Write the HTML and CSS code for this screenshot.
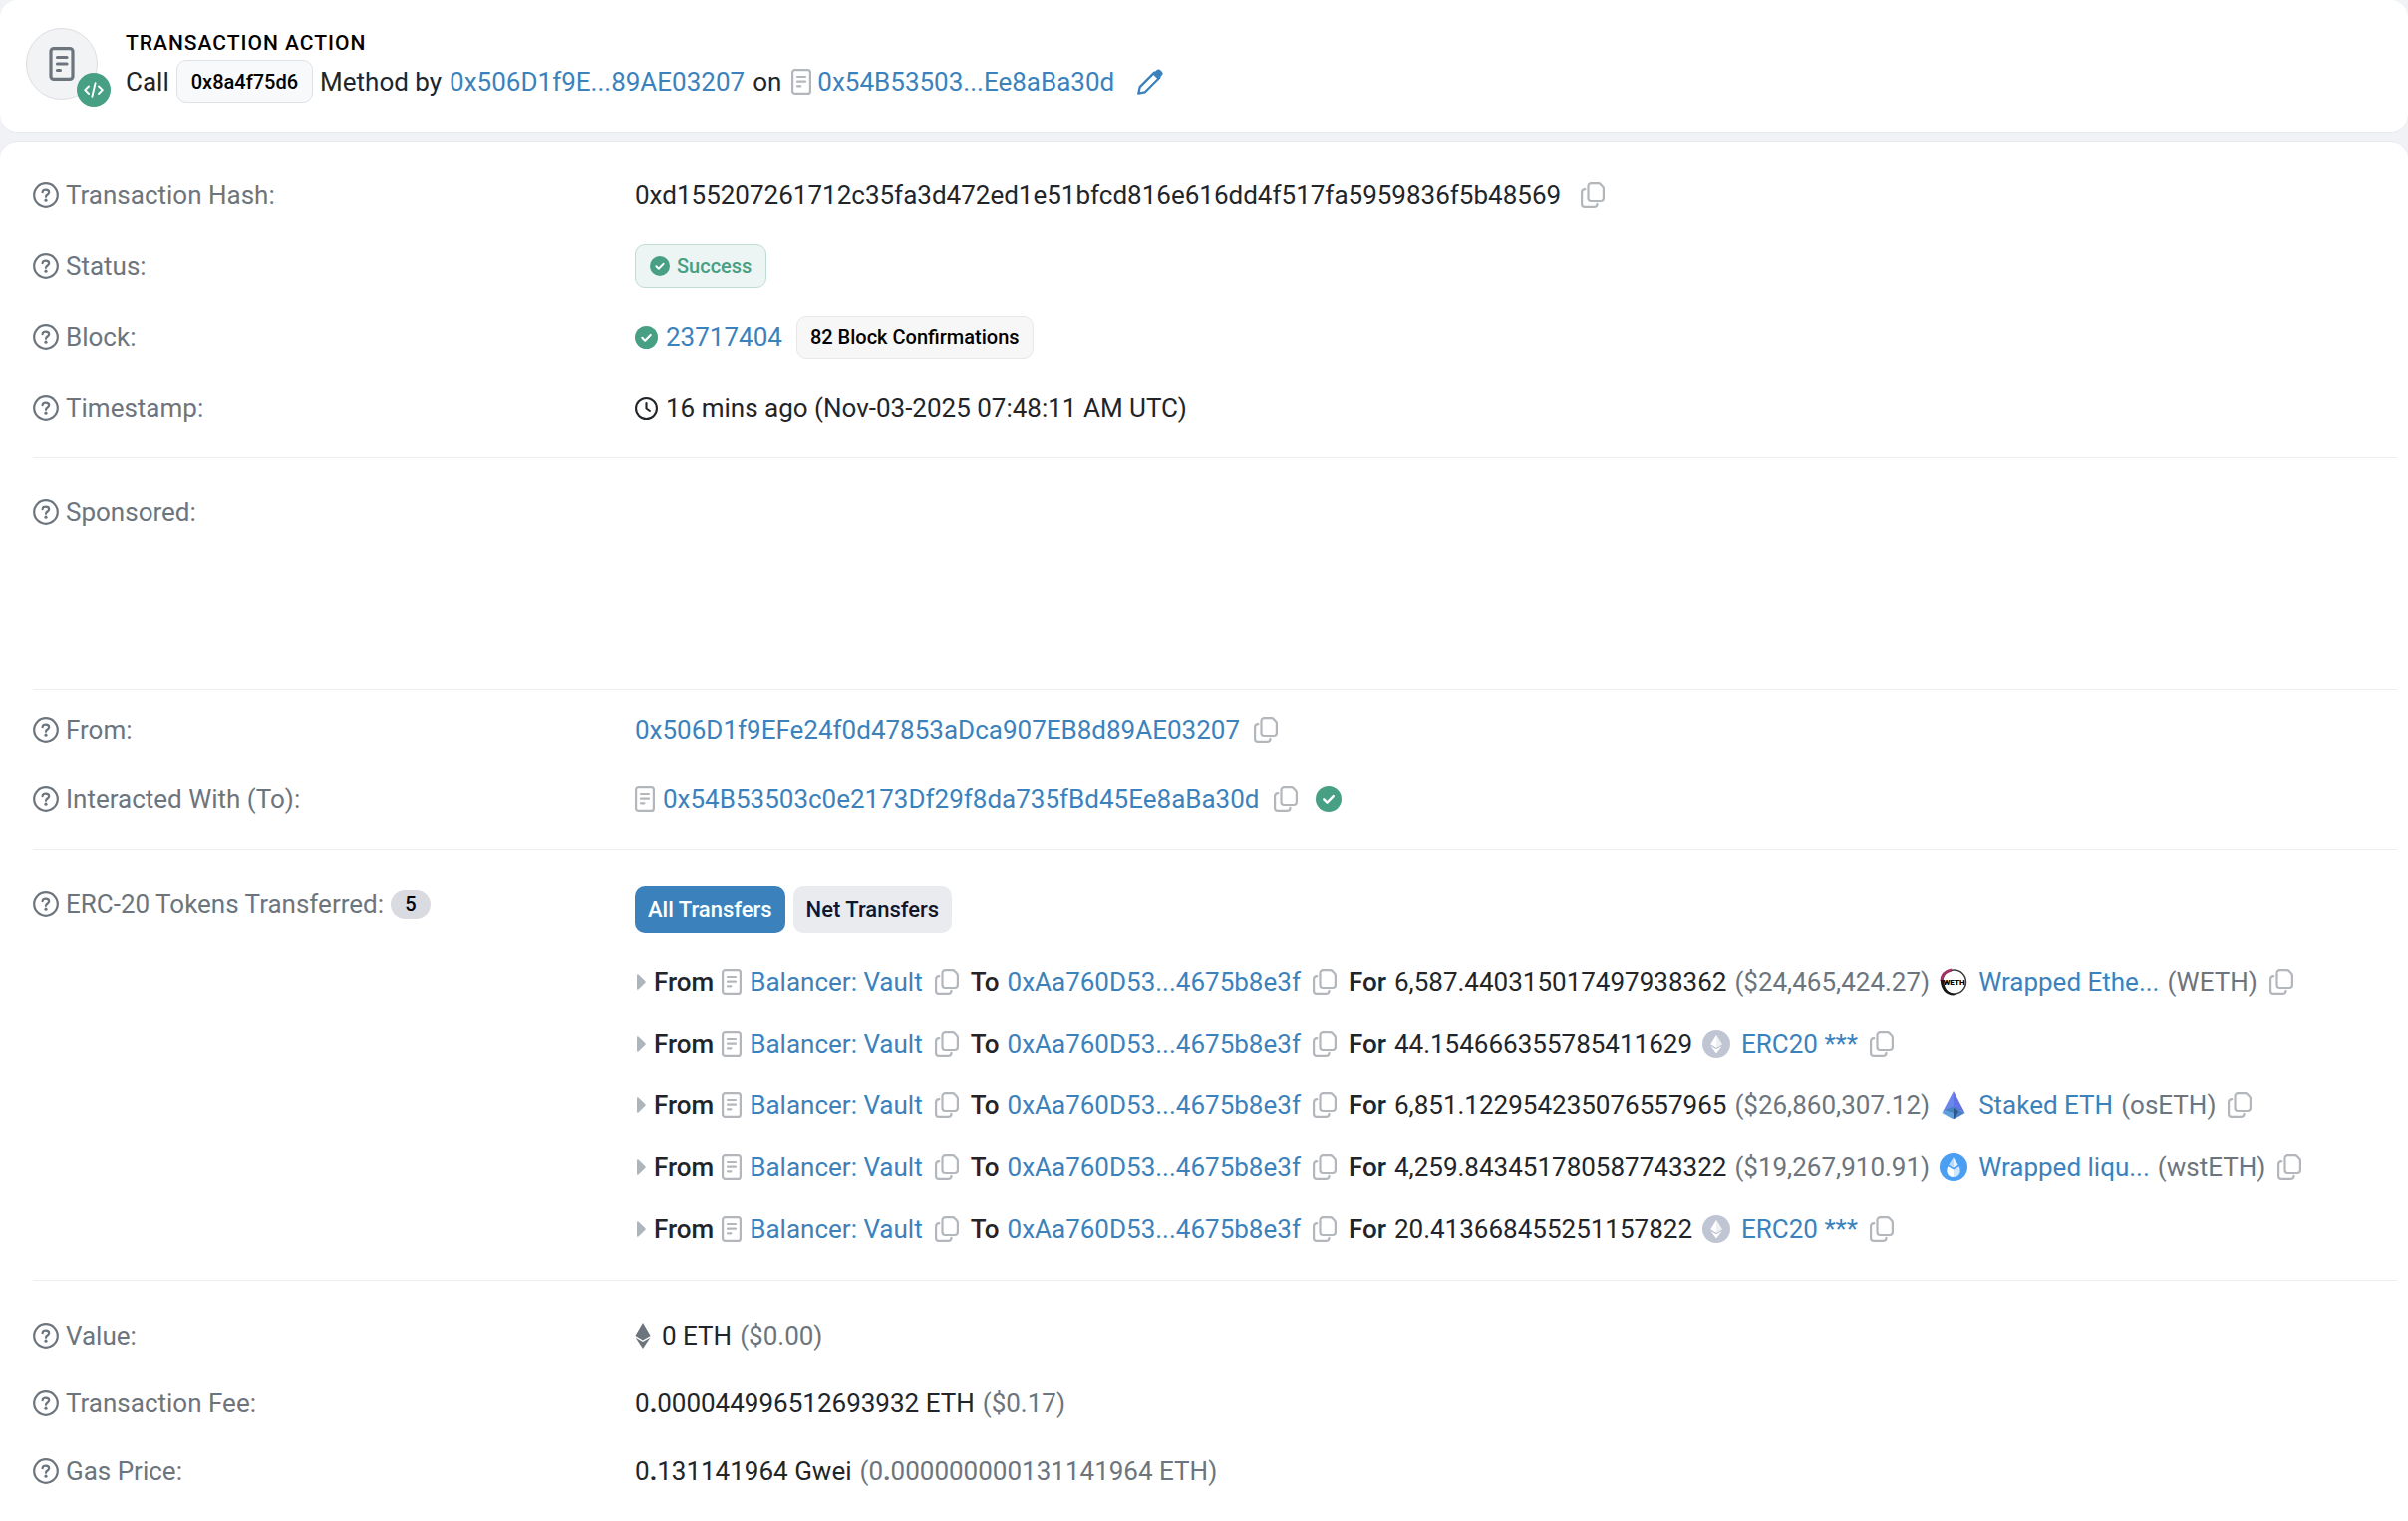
FILE: index.html
```html
<!DOCTYPE html>
<html lang="en">
<head>
<meta charset="utf-8">
<title>Transaction Details</title>
<link rel="stylesheet" href="styles.css">
</head>
<body>
<svg class="sprite" aria-hidden="true">
  <symbol id="help" viewBox="0 0 26 26"><g fill="none" stroke="currentColor" stroke-width="2.2"><circle cx="13" cy="13" r="11.8"/><path d="M9.6 10.2C9.7 8.4 11 7.7 12.9 7.7c2 0 3.3 1 3.3 2.6 0 2.1-3.2 2.3-3.2 4.5" stroke-linecap="round"/></g><circle cx="13" cy="18.2" r="1.6" fill="currentColor"/></symbol>
  <symbol id="doc" viewBox="0 0 20 26"><g fill="none" stroke="currentColor" stroke-width="2.2" stroke-linecap="round"><rect x="1.100" y="1.100" width="17.800" height="23.800" rx="2.500"/><path d="M6 8h8M6 12.700h8M6 17.300h3.400"/></g></symbol>
  <symbol id="doc-bold" viewBox="0 0 26 34"><g fill="none" stroke="currentColor" stroke-width="3.200" stroke-linecap="round"><rect x="2" y="1.600" width="22" height="30.800" rx="3"/><path d="M8.500 10.500h9.500M8.500 17h9.500M8.500 23.500h3"/></g></symbol>
  <symbol id="copy" viewBox="0 0 24 26"><g fill="none" stroke="currentColor" stroke-width="2.2" stroke-linecap="round" stroke-linejoin="round"><path d="M10.500 1.100h7.300c.7 0 1.300.3 1.800.8l2.500 2.700c.5.5.8 1.100.8 1.800v9.600c0 1.700-1.300 3-3 3h-9.400c-1.700 0-3-1.300-3-3V4.100c0-1.700 1.300-3 3-3z"/><path d="M4.300 7.200C2.300 7.300 1.100 8.500 1.100 10.300V21.900c0 1.700 1.300 3 3 3h8.900c2.100 0 3.500-1.300 3.500-3"/></g></symbol>
  <symbol id="check" viewBox="0 0 24 24"><circle cx="12" cy="12" r="12" fill="currentColor"/><path d="M7.600 12.300l3 3 5.800-6" fill="none" stroke="#fff" stroke-width="2.200" stroke-linecap="round" stroke-linejoin="round"/></symbol>
  <symbol id="clock" viewBox="0 0 24 24"><g fill="none" stroke="currentColor" stroke-width="2.200" stroke-linecap="round" stroke-linejoin="round"><circle cx="12" cy="12" r="10.900"/><path d="M12 6.200V12l3.600 2.600"/></g></symbol>
  <symbol id="code" viewBox="0 0 20 16"><path d="M5 4.500L1.200 8.200 5 12M15 4.500l3.800 3.700L15 12M11.600 1.200L8.400 14.800" fill="none" stroke="currentColor" stroke-width="1.900" stroke-linecap="round" stroke-linejoin="round"/></symbol>
  <symbol id="pencil" viewBox="0 0 26 26"><path d="M1.300 24.700l1.400-6.600L17.200 3.600l5.200 5.200L7.900 23.300z" fill="none" stroke="currentColor" stroke-width="2.300" stroke-linejoin="round"/><path d="M15.500 5.200l3.900-3.900c1.200-1.200 2.700-1.200 3.900 0l1.400 1.400c1.200 1.200 1.200 2.700 0 3.900l-3.900 3.900z" fill="currentColor"/></symbol>
  <symbol id="caret" viewBox="0 0 9 16"><path d="M0 1.200C0 .3.800 0 1.500.6l6.700 6.300c.7.700.7 1.500 0 2.200L1.500 15.400C.8 16 0 15.700 0 14.800z" fill="currentColor"/></symbol>
  <symbol id="eth" viewBox="0 0 16 26"><path d="M8 0l7.600 13L8 17.500.4 13zM8 19l7.400-4.300L8 26 .6 14.700z" fill="currentColor"/></symbol>
  <symbol id="erc20" viewBox="0 0 28 28"><circle cx="14" cy="14" r="14" fill="#bfc5d3"/><path d="M14 5l5.800 9.300L14 17.700l-5.800-3.400zM14 19.200l5.600-3.300L14 23.500l-5.600-7.600z" fill="#fff"/><path d="M14 5l5.800 9.300L14 17.700z" fill="#eef0f4"/></symbol>
  <symbol id="oseth" viewBox="0 0 28 28"><path d="M14 0L2.500 22 14 16z" fill="#6b86ee"/><path d="M14 0l11.500 22L14 16z" fill="#6273ea"/><path d="M2.500 22L14 15.500V28.500z" fill="#5c9fdc"/><path d="M25.500 22L14 15.500V28.500z" fill="#4a80c8"/><path d="M5 19l9-3.500 7 3.500-7 3z" fill="#4682bd"/><path d="M14 17l5 3.500-5 8z" fill="#2c5589"/></symbol>
  <symbol id="wsteth" viewBox="0 0 28 28"><circle cx="14" cy="14" r="14" fill="#4b9ff2"/><path d="M14 4.500l4.600 7.300L14 14.500l-4.600-2.700z" fill="#e6f2ff"/><path d="M14 4.500v10l-4.600-2.700z" fill="#b9dafb"/><path d="M8.500 13.300L14 16.500V24c-6.300 0-8.200-6-5.500-10.700z" fill="#fff"/><path d="M19.500 13.300L14 16.500V24c6.300 0 8.200-6 5.500-10.700z" fill="#cfe6fd"/></symbol>
</svg>

<header class="card action">
  <div class="avatar">
    <svg class="avatar-doc"><use href="#doc-bold"/></svg>
    <span class="avatar-badge"><svg class="code-icon"><use href="#code"/></svg></span>
  </div>
  <div class="action-text">
    <h1 class="action-title">TRANSACTION ACTION</h1>
    <div class="line">
      <span>Call</span>
      <span class="chip method">0x8a4f75d6</span>
      <span>Method by</span>
      <a href="#from">0x506D1f9E...89AE03207</a>
      <span>on</span>
      <span class="with-doc"><svg class="doc"><use href="#doc"/></svg><a href="#to">0x54B53503...Ee8aBa30d</a></span>
      <button class="icon-btn edit" aria-label="Edit note"><svg class="pencil"><use href="#pencil"/></svg></button>
    </div>
  </div>
</header>

<main class="card details">
  <section class="group">
    <div class="row">
      <div class="label"><svg class="help"><use href="#help"/></svg>Transaction Hash:</div>
      <div class="line"><span>0xd155207261712c35fa3d472ed1e51bfcd816e616dd4f517fa5959836f5b48569</span><button class="icon-btn wide" aria-label="Copy hash"><svg class="copy"><use href="#copy"/></svg></button></div>
    </div>
    <div class="row">
      <div class="label"><svg class="help"><use href="#help"/></svg>Status:</div>
      <div class="line"><span class="chip success"><svg class="check-sm"><use href="#check"/></svg>Success</span></div>
    </div>
    <div class="row">
      <div class="label"><svg class="help"><use href="#help"/></svg>Block:</div>
      <div class="line"><svg class="check-md"><use href="#check"/></svg><a href="#block">23717404</a><span class="chip confirmations">82 Block Confirmations</span></div>
    </div>
    <div class="row">
      <div class="label"><svg class="help"><use href="#help"/></svg>Timestamp:</div>
      <div class="line"><svg class="clock"><use href="#clock"/></svg><span>16 mins ago (Nov-03-2025 07:48:11 AM UTC)</span></div>
    </div>
  </section>

  <section class="group sponsored">
    <div class="row">
      <div class="label"><svg class="help"><use href="#help"/></svg>Sponsored:</div>
    </div>
  </section>

  <section class="group parties">
    <div class="row" id="from">
      <div class="label"><svg class="help"><use href="#help"/></svg>From:</div>
      <div class="line"><a href="#from">0x506D1f9EFe24f0d47853aDca907EB8d89AE03207</a><button class="icon-btn party" aria-label="Copy address"><svg class="copy"><use href="#copy"/></svg></button></div>
    </div>
    <div class="row" id="to">
      <div class="label"><svg class="help"><use href="#help"/></svg>Interacted With (To):</div>
      <div class="line"><svg class="doc"><use href="#doc"/></svg><a href="#to">0x54B53503c0e2173Df29f8da735fBd45Ee8aBa30d</a><button class="icon-btn party" aria-label="Copy address"><svg class="copy"><use href="#copy"/></svg></button><svg class="check-lg"><use href="#check"/></svg></div>
    </div>
  </section>

  <section class="group">
    <div class="row tokens">
      <div class="label"><svg class="help"><use href="#help"/></svg>ERC-20 Tokens Transferred:<span class="count">5</span></div>
      <div>
        <div class="tabs"><button class="tab active">All Transfers</button><button class="tab">Net Transfers</button></div>
        <ul class="transfers">
          <li class="line"><svg class="caret"><use href="#caret"/></svg><b>From</b><svg class="doc"><use href="#doc"/></svg><a href="#vault">Balancer: Vault</a><button class="icon-btn" aria-label="Copy sender"><svg class="copy"><use href="#copy"/></svg></button><b>To</b><a href="#receiver">0xAa760D53...4675b8e3f</a><button class="icon-btn" aria-label="Copy receiver"><svg class="copy"><use href="#copy"/></svg></button><b>For</b><span>6,587.440315017497938362</span><span class="muted">($24,465,424.27)</span><svg class="token" viewBox="0 0 28 28"><circle cx="14.500" cy="14" r="12" fill="#fff" stroke="#3a3a3a" stroke-width="1.500"/><path d="M12 2C6 3 2 7 2 13" fill="none" stroke="#a63062" stroke-width="3"/><path d="M.8 12C1 21 6 27.500 14 27.500l3-1C9 26 4.500 21 4 12z" fill="#181818"/><text x="14.500" y="17" text-anchor="middle" class="weth-text">WETH</text></svg><a href="#weth-token">Wrapped Ethe...</a><span class="muted">(WETH)</span><button class="icon-btn" aria-label="Copy token"><svg class="copy"><use href="#copy"/></svg></button></li>
          <li class="line"><svg class="caret"><use href="#caret"/></svg><b>From</b><svg class="doc"><use href="#doc"/></svg><a href="#vault">Balancer: Vault</a><button class="icon-btn" aria-label="Copy sender"><svg class="copy"><use href="#copy"/></svg></button><b>To</b><a href="#receiver">0xAa760D53...4675b8e3f</a><button class="icon-btn" aria-label="Copy receiver"><svg class="copy"><use href="#copy"/></svg></button><b>For</b><span>44.154666355785411629</span><svg class="token"><use href="#erc20"/></svg><a href="#token">ERC20 ***</a><button class="icon-btn" aria-label="Copy token"><svg class="copy"><use href="#copy"/></svg></button></li>
          <li class="line"><svg class="caret"><use href="#caret"/></svg><b>From</b><svg class="doc"><use href="#doc"/></svg><a href="#vault">Balancer: Vault</a><button class="icon-btn" aria-label="Copy sender"><svg class="copy"><use href="#copy"/></svg></button><b>To</b><a href="#receiver">0xAa760D53...4675b8e3f</a><button class="icon-btn" aria-label="Copy receiver"><svg class="copy"><use href="#copy"/></svg></button><b>For</b><span>6,851.122954235076557965</span><span class="muted">($26,860,307.12)</span><svg class="token"><use href="#oseth"/></svg><a href="#oseth-token">Staked ETH</a><span class="muted">(osETH)</span><button class="icon-btn" aria-label="Copy token"><svg class="copy"><use href="#copy"/></svg></button></li>
          <li class="line"><svg class="caret"><use href="#caret"/></svg><b>From</b><svg class="doc"><use href="#doc"/></svg><a href="#vault">Balancer: Vault</a><button class="icon-btn" aria-label="Copy sender"><svg class="copy"><use href="#copy"/></svg></button><b>To</b><a href="#receiver">0xAa760D53...4675b8e3f</a><button class="icon-btn" aria-label="Copy receiver"><svg class="copy"><use href="#copy"/></svg></button><b>For</b><span>4,259.843451780587743322</span><span class="muted">($19,267,910.91)</span><svg class="token"><use href="#wsteth"/></svg><a href="#wsteth-token">Wrapped liqu...</a><span class="muted">(wstETH)</span><button class="icon-btn" aria-label="Copy token"><svg class="copy"><use href="#copy"/></svg></button></li>
          <li class="line"><svg class="caret"><use href="#caret"/></svg><b>From</b><svg class="doc"><use href="#doc"/></svg><a href="#vault">Balancer: Vault</a><button class="icon-btn" aria-label="Copy sender"><svg class="copy"><use href="#copy"/></svg></button><b>To</b><a href="#receiver">0xAa760D53...4675b8e3f</a><button class="icon-btn" aria-label="Copy receiver"><svg class="copy"><use href="#copy"/></svg></button><b>For</b><span>20.413668455251157822</span><svg class="token"><use href="#erc20"/></svg><a href="#token">ERC20 ***</a><button class="icon-btn" aria-label="Copy token"><svg class="copy"><use href="#copy"/></svg></button></li>
        </ul>
      </div>
    </div>
  </section>

  <section class="group costs">
    <div class="row">
      <div class="label"><svg class="help"><use href="#help"/></svg>Value:</div>
      <div class="line"><svg class="eth"><use href="#eth"/></svg><span>0 ETH</span><span class="muted">($0.00)</span></div>
    </div>
    <div class="row">
      <div class="label"><svg class="help"><use href="#help"/></svg>Transaction Fee:</div>
      <div class="line"><span>0<b class="dot">.</b>000044996512693932 ETH</span><span class="muted">($0.17)</span></div>
    </div>
    <div class="row">
      <div class="label"><svg class="help"><use href="#help"/></svg>Gas Price:</div>
      <div class="line"><span>0<b class="dot">.</b>131141964 Gwei</span><span class="muted">(0<b class="dot">.</b>000000000131141964 ETH)</span></div>
    </div>
  </section>
</main>
</body>
</html>
```
FILE: styles.css
```css
* {
  box-sizing: border-box;
}

body {
  margin: 0;
  background: #f0f2f6;
  color: #212529;
  font: 26px/32px Roboto, "Liberation Sans", sans-serif;
}

svg {
  display: block;
  flex: none;
}

.sprite {
  position: absolute;
  width: 0;
  height: 0;
}

a {
  color: #3b82bd;
  text-decoration: none;
}

b {
  font-weight: 500;
}

.dot {
  font-weight: 700;
}

.muted {
  color: #6c757d;
}

.card {
  background: #fff;
  border: 1px solid #e6e8ec;
  border-width: 1px 0;
  border-radius: 18px;
}

/* Header card */
.action {
  display: flex;
  gap: 28px;
  border-top: 0;
  padding: 28px 26px 29px;
}

.avatar {
  position: relative;
  display: flex;
  align-items: center;
  justify-content: center;
  width: 72px;
  height: 72px;
  border: 1px solid #dcdee1;
  border-radius: 50%;
  background: #f2f3f5;
  color: #6c757d;
}

.avatar-doc {
  width: 26px;
  height: 34px;
}

.avatar-badge {
  position: absolute;
  right: -14px;
  bottom: -8px;
  display: flex;
  align-items: center;
  justify-content: center;
  width: 34px;
  height: 34px;
  border-radius: 50%;
  background: #479f84;
  color: #fff;
}

.code-icon {
  width: 20px;
  height: 16px;
}

.action-title {
  margin: 3px 0 5px;
  color: #000;
  font-size: 21px;
  font-weight: 500;
  line-height: 24px;
  letter-spacing: 1px;
}

.line {
  display: flex;
  align-items: center;
  gap: 8px;
  white-space: nowrap;
}

.with-doc {
  display: flex;
  align-items: center;
  gap: 6px;
  margin-left: 2px;
}

.chip {
  display: flex;
  align-items: center;
  gap: 7px;
  height: 43px;
  padding: 0 14px;
  border: 1px solid #dee2e6;
  border-radius: 10px;
  background: #f8f9fb;
  color: #000;
  font-size: 20px;
  font-weight: 500;
}

.chip.method {
  margin: 0 -1px;
}

.chip.success {
  height: 44px;
  border-color: #bfdcd3;
  background: #ecf5f3;
  color: #479f84;
}

.chip.confirmations {
  margin-left: 6px;
  padding: 0 13px;
  border-color: #e6e7e9;
  background: #f7f7f8;
}

.icon-btn {
  margin: 0 4px;
  padding: 0;
  border: 0;
  background: none;
  color: #b3b7bc;
}

.icon-btn.wide {
  margin: 0 12px;
}

.icon-btn.party {
  margin: 0 6px;
}

.icon-btn.edit {
  margin: 0 15px;
  color: #3b82bd;
}

.help,
.pencil,
.check-lg {
  width: 26px;
  height: 26px;
}

.doc {
  width: 20px;
  height: 26px;
  color: #b3b7bc;
}

.copy {
  width: 24px;
  height: 26px;
}

.check-sm {
  width: 20px;
  height: 20px;
}

.check-md,
.clock {
  width: 23px;
  height: 23px;
}

.check-md,
.check-lg {
  color: #479f84;
}

.check-lg {
  margin-left: 4px;
}

.caret {
  width: 9px;
  height: 16px;
  color: #adb5bd;
}

.token {
  width: 28px;
  height: 28px;
  margin: 0 3px 0 2px;
}

.weth-text {
  font: 900 8px Roboto, sans-serif;
}

.eth {
  width: 16px;
  height: 26px;
  margin-right: 3px;
  color: #6c757d;
}

/* Details card */
.details {
  margin-top: 8px;
  padding: 0 11px 27px 33px;
}

.group {
  display: flex;
  flex-direction: column;
  gap: 27px;
  padding: 32px 0 28px;
}

.group + .group {
  border-top: 1px solid #eceef0;
}

.group.sponsored {
  padding-bottom: 155px;
}

.group.parties {
  gap: 26px;
  padding-top: 18px;
}

.group.costs {
  gap: 24px;
  padding-top: 33px;
}

.row {
  display: grid;
  grid-template-columns: 25% 1fr;
  column-gap: 11px;
  min-height: 44px;
  align-items: center;
}

.row.tokens {
  align-items: start;
}

.label {
  display: flex;
  align-items: center;
  gap: 7px;
  min-height: 44px;
  color: #6c757d;
}

.count {
  width: 40px;
  border-radius: 15px;
  background: #d9dbe1;
  color: #000;
  font-size: 20px;
  font-weight: 500;
  line-height: 29px;
  text-align: center;
}

.tabs {
  display: flex;
  gap: 8px;
  margin: 4px 0 33px;
}

.tab {
  height: 47px;
  padding: 0 13px;
  border: 0;
  border-radius: 10px;
  background: #e9ebef;
  color: #111827;
  font: 500 22px Roboto, "Liberation Sans", sans-serif;
}

.tab.active {
  background: #3b82bd;
  color: #fff;
}

.transfers {
  display: flex;
  flex-direction: column;
  gap: 30px;
  margin: 0;
  padding: 0 0 7px 2px;
  list-style: none;
}
```
